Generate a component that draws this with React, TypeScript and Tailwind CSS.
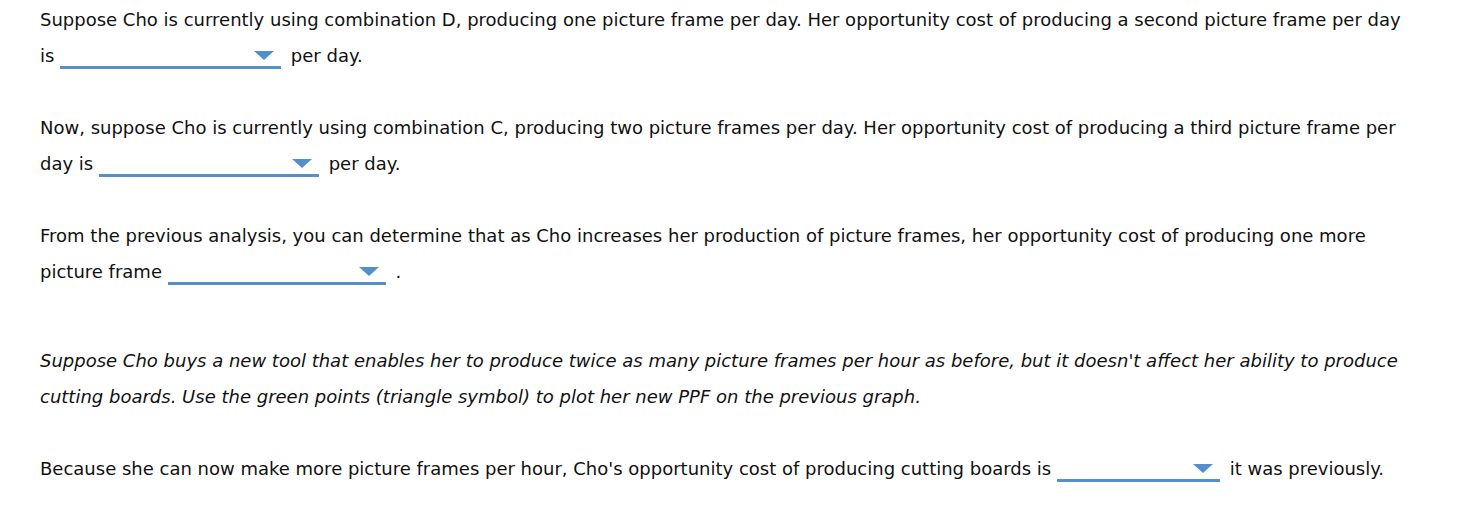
import React from 'react'

function Dropdown({ w }: { w: string }) {
  return (
    <span className={`inline-block ${w} h-[19px] mr-[4px] align-[-7px] border-b-[3px] border-[#5390c9]`}>
      <svg className="block ml-auto mr-[7px] mt-[1px]" width="20" height="9" viewBox="0 0 20 9">
        <polygon points="0,0 20,0 10,9" fill="#5390c9" />
      </svg>
    </span>
  )
}

export default function App() {
  return (
    <div className="min-h-[505px] bg-white pl-[40px] pr-[20px] pt-[2px] text-[18px] leading-[36px] text-[#111] [font-family:Verdana,'DejaVu_Sans',sans-serif]">
      <p>
        Suppose Cho is currently using combination D, producing one picture frame per day. Her opportunity cost of producing a second picture frame per day
        <br />
        is <Dropdown w="w-[221px]" /> per day.
      </p>
      <p className="mt-[36px]">
        Now, suppose Cho is currently using combination C, producing two picture frames per day. Her opportunity cost of producing a third picture frame per
        <br />
        day is <Dropdown w="w-[220px]" /> per day.
      </p>
      <p className="mt-[36px]">
        From the previous analysis, you can determine that as Cho increases her production of picture frames, her opportunity cost of producing one more
        <br />
        picture frame <Dropdown w="w-[218px]" /> .
      </p>
      <p className="mt-[53px] italic">
        Suppose Cho buys a new tool that enables her to produce twice as many picture frames per hour as before, but it doesn't affect her ability to produce
        <br />
        cutting boards. Use the green points (triangle symbol) to plot her new PPF on the previous graph.
      </p>
      <p className="mt-[36px]">
        Because she can now make more picture frames per hour, Cho's opportunity cost of producing cutting boards is <Dropdown w="w-[163px]" /> it was previously.
      </p>
    </div>
  )
}
